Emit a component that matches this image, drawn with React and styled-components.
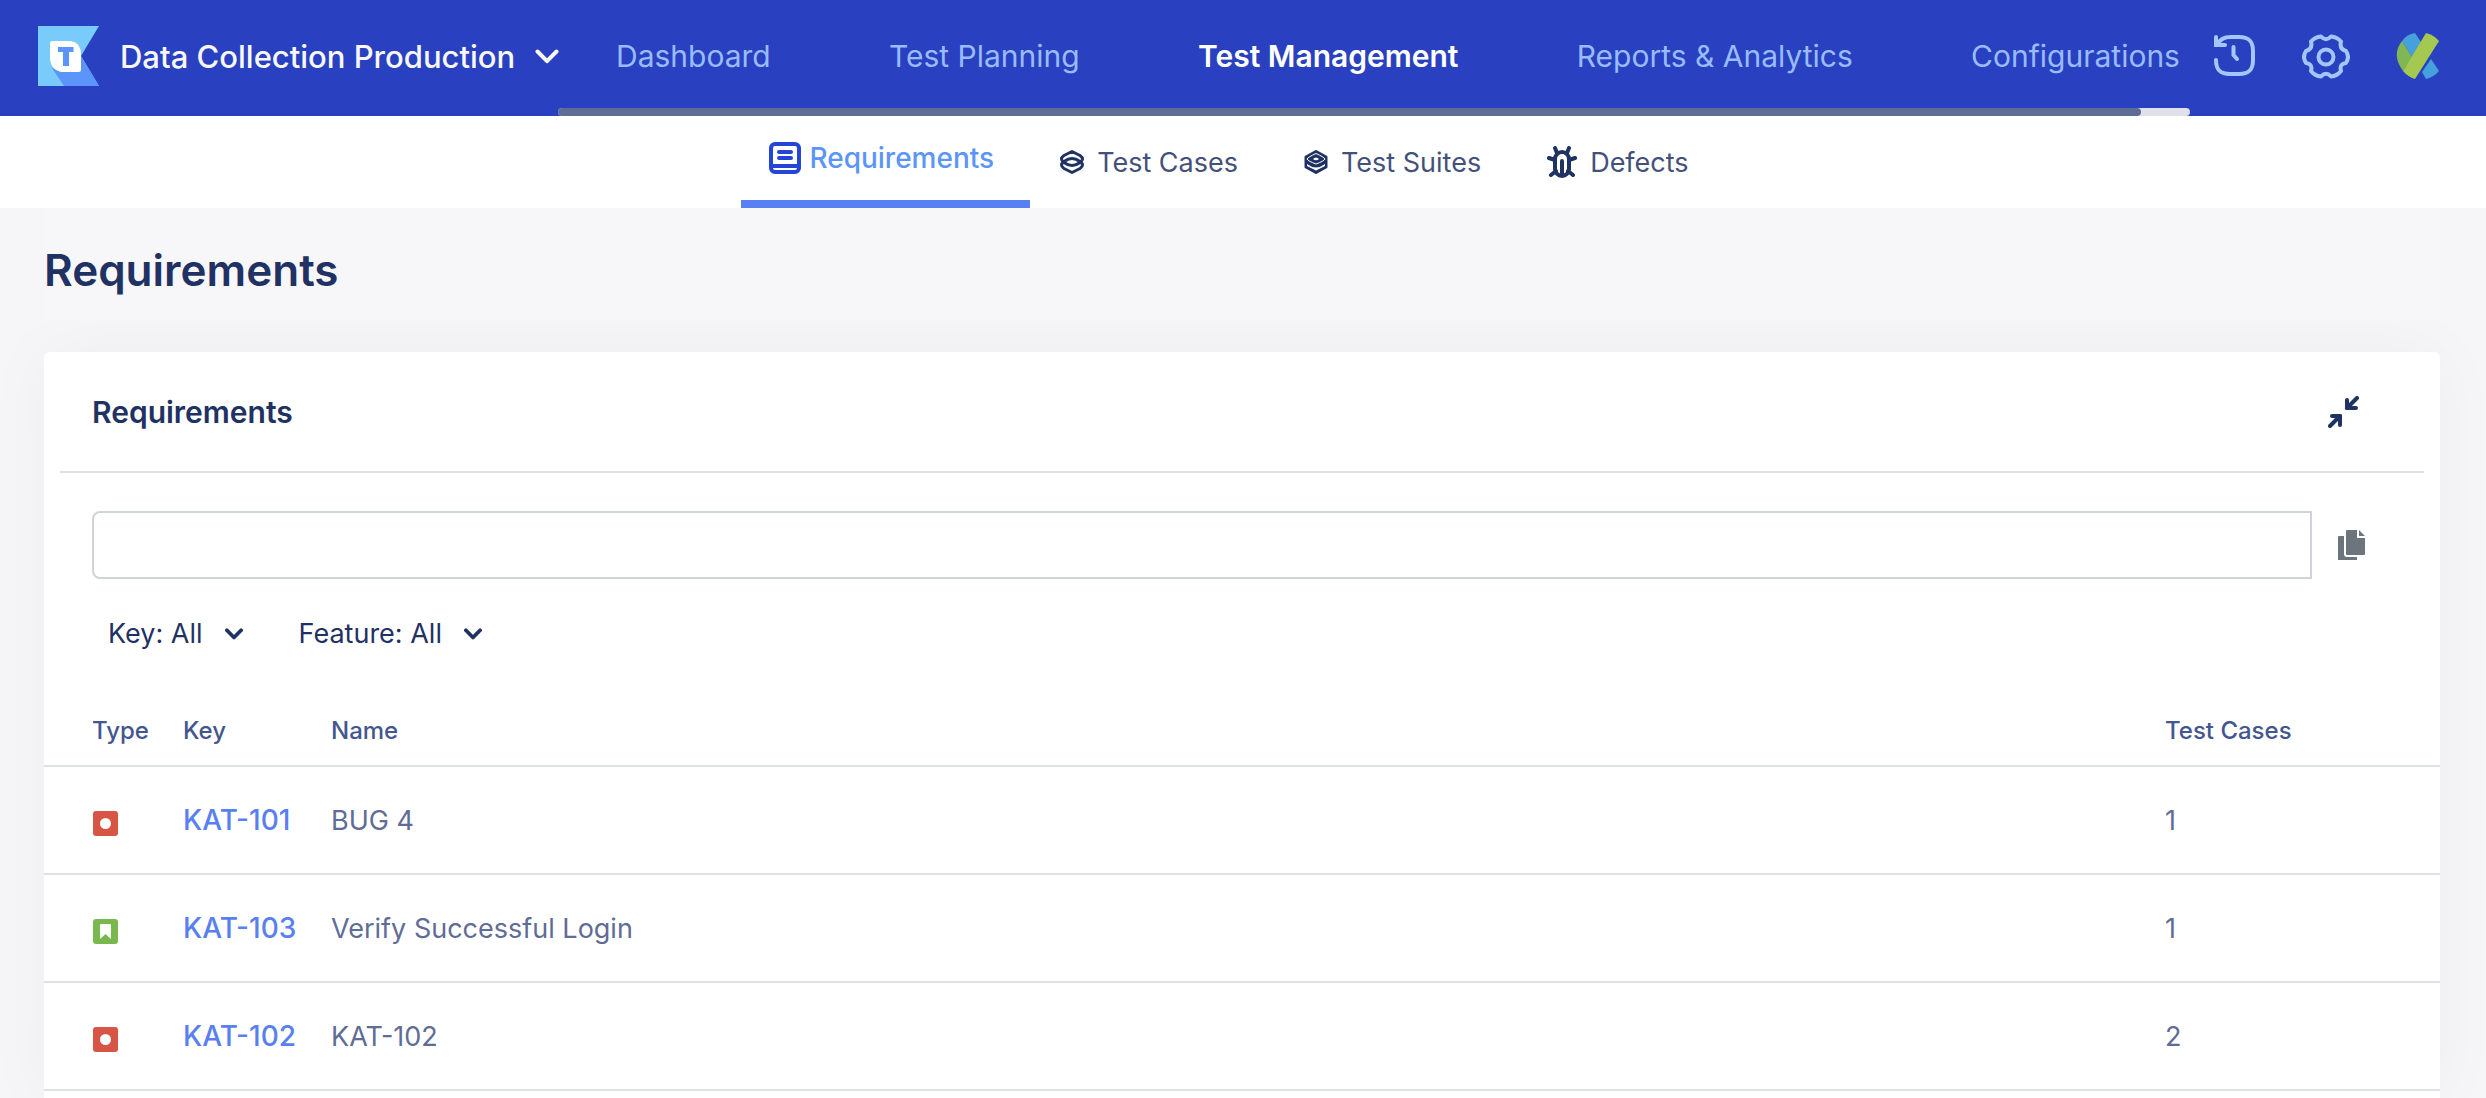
import React from "react";
import styled, { createGlobalStyle, css } from "styled-components";

const Global = createGlobalStyle`
  *, *::before, *::after { box-sizing: border-box; }
  html, body { margin: 0; background: #f6f6f9; }
  body { font-family: Inter, "Liberation Sans", sans-serif; font-size: 27px; color: #1f3263; }
  button { font: inherit; color: inherit; background: none; border: 0; padding: 0; cursor: pointer; }
  a { text-decoration: none; color: inherit; }
  svg { display: block; flex: none; }
  h1, h2 { margin: 0; }
`;

const Page = styled.div`
  display: flex;
  flex-direction: column;
  min-height: 100vh;
`;

const Header = styled.header`
  display: flex;
  height: 116px;
  background: #2941c0;
  padding: 0 46px 0 38px;
`;

const Brand = styled.div`
  display: flex;
  align-items: center;
  width: 520px;
  flex: none;
  gap: 20px;
  padding-bottom: 4px;
`;

const ProjectButton = styled.button`
  display: flex;
  align-items: center;
  gap: 20px;
  color: #f8f8fb;
  font-size: 31px;
  font-weight: 500;
  white-space: nowrap;
`;

const NavScroll = styled.div`
  flex: 1;
  min-width: 0;
  display: flex;
  flex-direction: column;
`;

const MainNav = styled.nav`
  flex: 1;
  display: flex;
  align-items: center;
  justify-content: space-between;
  padding: 4px 10px 0 58px;
`;

const NavLink = styled.a`
  font-size: 30px;
  white-space: nowrap;
  font-weight: ${(p) => (p.$active ? 600 : 400)};
  color: ${(p) => (p.$active ? "#ffffff" : "#98bcff")};
`;

const Track = styled.div`
  height: 8px;
  border-radius: 4px;
  background: #dfe0ea;
`;

const Thumb = styled.div`
  width: 97%;
  height: 8px;
  border-radius: 4px;
  background: #5f6c96;
`;

const Tools = styled.div`
  display: flex;
  align-items: center;
  gap: 46px;
  padding: 0 0 4px 24px;
`;

const Tabs = styled.nav`
  display: flex;
  justify-content: center;
  height: 92px;
  background: #ffffff;
  padding-right: 20px;
`;

const Tab = styled.a`
  display: flex;
  align-items: center;
  gap: 13px;
  padding: 0 36px 0 30px;
  color: #44507a;
  ${(p) =>
    p.$active &&
    css`
      gap: 8px;
      padding-left: 28px;
      font-size: 28px;
      color: #5b95f9;
      font-weight: 500;
      border-bottom: 8px solid #5880f2;
    `}
`;

const Main = styled.main`
  flex: 1;
  display: flex;
  flex-direction: column;
  padding: 0 46px 0 44px;
`;

const PageTitle = styled.h1`
  position: relative;
  z-index: 1;
  background: #f7f7fa;
  font-size: 44px;
  font-weight: 600;
  line-height: 56px;
  padding: 34px 0 22px;
`;

const Card = styled.section`
  flex: 1;
  margin-top: 32px;
  background: #ffffff;
  border-radius: 6px 6px 0 0;
  box-shadow: 0 0 70px rgba(0, 0, 0, 0.04);
`;

const CardHead = styled.div`
  display: flex;
  align-items: center;
  justify-content: space-between;
  height: 121px;
  margin: 0 16px;
  padding: 0 64px 0 32px;
  border-bottom: 2px solid #dce0e5;
`;

const CardTitle = styled.h2`
  font-size: 30px;
  font-weight: 600;
`;

const SearchRow = styled.div`
  display: flex;
  align-items: center;
  gap: 26px;
  padding: 38px 74px 0 48px;
`;

const SearchInput = styled.input`
  flex: 1;
  min-width: 0;
  height: 68px;
  border: 2px solid #ced4da;
  border-radius: 8px 0 0 8px;
  padding: 0 20px;
  font: inherit;
  color: inherit;
  outline: none;
`;

const Filters = styled.div`
  display: flex;
  gap: 56px;
  padding: 37px 64px 0;
`;

const FilterButton = styled.button`
  display: flex;
  align-items: center;
  gap: 22px;
  line-height: 36px;
`;

const Table = styled.table`
  width: 100%;
  margin-top: 23px;
  border-collapse: collapse;
  table-layout: fixed;
  color: #5f6c96;

  th, td {
    text-align: left;
    padding: 0;
    border-bottom: 2px solid #dee2e6;
  }
  th {
    height: 91px;
    padding-top: 20px;
    font-size: 24px;
    font-weight: 500;
    color: #44568f;
  }
  td { height: 108px; }
  th:first-child { padding-left: 48px; }
  td:first-child { padding: 8px 0 0 48px; }
`;

const Col = styled.col`
  width: ${(p) => p.$width};
`;

const KeyLink = styled.a`
  color: #5880f2;
  font-size: 28px;
  font-weight: 500;
`;

const Logo = () => (
  <svg width="62" height="60" viewBox="0 0 62 60" aria-hidden="true">
    <path d="M0 0H61L43 30L61 60H0Z" fill="#79cbfb" />
    <path d="M14 42L43 30L61 60H26Z" fill="#5b95f9" />
    <path d="M14 15H33Q43 17 43 28V44Q43 46 41 46H23Q13 44 12 33V17Q12 15 14 15Z" fill="#fff" />
    <path d="M20 21H35.500V26H31V40H25V26H20Z" fill="#5b95f9" />
  </svg>
);

const Chevron = ({ w = 24, h = 15, stroke = 4 }) => (
  <svg width={w} height={h} viewBox="0 0 24 15" fill="none" stroke="currentColor" strokeWidth={stroke} strokeLinecap="round" strokeLinejoin="round" aria-hidden="true">
    <path d="M2.500 2.500L12 12.200L21.500 2.500" />
  </svg>
);

const HistoryIcon = () => (
  <svg width="42" height="42" viewBox="0 0 42 42" fill="none" stroke="#a5c5ff" strokeWidth="4" strokeLinecap="round" aria-hidden="true">
    <path d="M2 25C2 35 6 39 16 39H25C35 39 39 35 39 25V16C39 6 35 2 25 2H17C10 2 6 4 4 9" />
    <path d="M2 2V10H11" />
    <path d="M19.500 12V20L23 24" />
  </svg>
);

const GearIcon = () => (
  <svg width="48" height="46" viewBox="0 0 48 46" fill="none" stroke="#a5c5ff" strokeWidth="4" strokeLinejoin="round" aria-hidden="true">
    <circle cx="24" cy="24" r="7.500" />
    <path d="M19 3.500Q24 9 29 3.500Q35 4 39 8.500Q37 16 44 18Q48 24 44 30Q37 31 39 38Q35 43 29 43.500Q24 38 19 43.500Q13 43 9 38Q11 31 4 30Q0 24 4 18Q11 16 9 8.500Q13 4 19 3.500Z" />
  </svg>
);

const AvatarIcon = () => (
  <svg width="44" height="48" viewBox="0 0 44 48" aria-hidden="true">
    <path d="M6 9Q11 2 19 1L25 10L16 25Z" fill="#45a0dc" />
    <path d="M6 9L16 25L7 39Q-5 23 6 9Z" fill="#80b654" />
    <path d="M30 1Q38 3 43 9L19 47Q12 45 7 39Z" fill="#a5c851" />
    <path d="M35 27L43 39Q38 45 30 47L26 40Z" fill="#45a0dc" />
  </svg>
);

const BookIcon = () => (
  <svg width="32" height="32" viewBox="0 0 32 32" fill="none" stroke="#2545d8" strokeWidth="4" strokeLinecap="round" aria-hidden="true">
    <rect x="2" y="2" width="28" height="28" rx="4" />
    <path d="M10 10H22M10 16H22M3 24H29" />
  </svg>
);

const CasesIcon = () => (
  <svg width="24" height="24" viewBox="0 0 24 24" fill="none" stroke="#1f3263" strokeWidth="3" strokeLinejoin="round" aria-hidden="true">
    <path d="M12 1.500L20 5.500Q25 9 20 12.500Q12 18.500 4 12.500Q-1 9 4 5.500Z" />
    <path d="M12 22.500L20 18.500Q25 15 20 11.500Q12 5.500 4 11.500Q-1 15 4 18.500Z" />
  </svg>
);

const SuitesIcon = () => (
  <svg width="24" height="24" viewBox="0 0 24 24" fill="none" strokeLinejoin="round" aria-hidden="true">
    <path d="M12 1.500L22 7V17L12 22.500L2 17V7Z" fill="#1f3263" stroke="#1f3263" strokeWidth="3" />
    <path d="M3 9Q4 7 12 3.500Q20 7 21 9Q20 11 12 14Q4 11 3 9Z" stroke="#fff" strokeWidth="1" />
    <path d="M9 9Q12 6 15 9Q12 11.500 9 9Z" fill="#fff" />
    <path d="M3 14Q12 21 21 14V16L12 20.500L3 16Z" fill="#fff" />
  </svg>
);

const BugIcon = () => (
  <svg width="30" height="32" viewBox="0 0 30 32" fill="none" stroke="#1f3263" strokeWidth="4" strokeLinecap="round" strokeLinejoin="round" aria-hidden="true">
    <rect x="8" y="6" width="14" height="24" rx="7" />
    <path d="M15 15V28M8 2L10 7M22 2L20 7M2 12L8 14M28 12L22 14M4 29L9 25M26 29L21 25" />
  </svg>
);

const CollapseIcon = () => (
  <svg width="32" height="32" viewBox="0 0 32 32" fill="none" stroke="#1f3263" strokeWidth="4" strokeLinecap="round" strokeLinejoin="round" aria-hidden="true">
    <path d="M29 2L19 12M19 4V12H28M2 30L12 20M4 20H12V29" />
    <path d="M19 8V12H23ZM12 24V20H8Z" fill="#1f3263" />
  </svg>
);

const CopyIcon = () => (
  <svg width="28" height="30" viewBox="0 0 28 30" fill="#6c757d" aria-hidden="true">
    <path d="M1 6H6V24Q6 27 9 27H19V30H0V7Q0 6 1 6Z" />
    <path d="M9 0H19V8H27V24Q27 25 26 25H9Q8 25 8 24V1Q8 0 9 0ZM21 0L27 6H21Z" />
  </svg>
);

const TypeIcon = ({ kind }) => (
  <svg width="26" height="26" viewBox="0 0 26 26" role="img" aria-label={kind}>
    <rect x="1" y="0" width="25" height="25" rx="3" fill={kind === "Bug" ? "#d65545" : "#79b84f"} />
    {kind === "Bug" ? <circle cx="13.500" cy="12.500" r="5.500" fill="#fff" /> : <path d="M9 5H18Q19 5 19 6V20L13.500 15L8 20V6Q8 5 9 5Z" fill="#fff" />}
  </svg>
);

const links = ["Dashboard", "Test Planning", "Test Management", "Reports & Analytics", "Configurations"];
const tabs = [
  ["Requirements", BookIcon],
  ["Test Cases", CasesIcon],
  ["Test Suites", SuitesIcon],
  ["Defects", BugIcon],
];
const rows = [
  ["Bug", "KAT-101", "BUG 4", 1],
  ["Story", "KAT-103", "Verify Successful Login", 1],
  ["Bug", "KAT-102", "KAT-102", 2],
];

export default function App() {
  return (
    <Page>
      <Global />
      <Header>
        <Brand>
          <Logo />
          <ProjectButton>
            Data Collection Production
            <Chevron />
          </ProjectButton>
        </Brand>
        <NavScroll>
          <MainNav>
            {links.map((l) => (
              <NavLink key={l} href="#" $active={l === "Test Management"}>{l}</NavLink>
            ))}
          </MainNav>
          <Track><Thumb /></Track>
        </NavScroll>
        <Tools>
          <button aria-label="History"><HistoryIcon /></button>
          <button aria-label="Settings"><GearIcon /></button>
          <button aria-label="Account"><AvatarIcon /></button>
        </Tools>
      </Header>
      <Tabs>
        {tabs.map(([label, Icon]) => (
          <Tab key={label} href="#" $active={label === "Requirements"}>
            <Icon />
            {label}
          </Tab>
        ))}
      </Tabs>
      <Main>
        <PageTitle>Requirements</PageTitle>
        <Card>
          <CardHead>
            <CardTitle>Requirements</CardTitle>
            <button aria-label="Collapse"><CollapseIcon /></button>
          </CardHead>
          <SearchRow>
            <SearchInput type="text" aria-label="Search requirements" />
            <button aria-label="Copy"><CopyIcon /></button>
          </SearchRow>
          <Filters>
            {["Key: All", "Feature: All"].map((f) => (
              <FilterButton key={f}>
                {f}
                <Chevron w={18} h={12} stroke={5} />
              </FilterButton>
            ))}
          </Filters>
          <Table>
            <colgroup>
              <Col $width="139px" />
              <Col $width="148px" />
              <Col />
              <Col $width="275px" />
            </colgroup>
            <thead>
              <tr>
                <th>Type</th>
                <th>Key</th>
                <th>Name</th>
                <th>Test Cases</th>
              </tr>
            </thead>
            <tbody>
              {rows.map(([kind, key, name, count]) => (
                <tr key={key}>
                  <td><TypeIcon kind={kind} /></td>
                  <td><KeyLink href="#">{key}</KeyLink></td>
                  <td>{name}</td>
                  <td>{count}</td>
                </tr>
              ))}
            </tbody>
          </Table>
        </Card>
      </Main>
    </Page>
  );
}
